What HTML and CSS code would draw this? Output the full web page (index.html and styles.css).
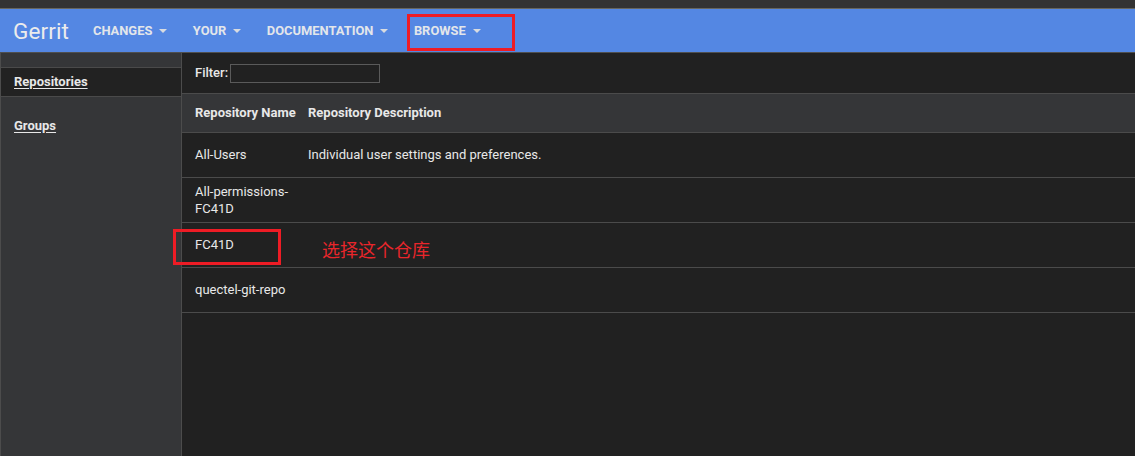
FILE: index.html
```html
<!DOCTYPE html>
<html lang="en">
<head>
<meta charset="utf-8">
<title>Gerrit - Repositories</title>
<link rel="stylesheet" href="styles.css">
</head>
<body>
<div class="topstrip"></div>
<header class="header">
  <div class="logo">Gerrit</div>
  <nav class="nav">
    <div class="nav-item">CHANGES<span class="caret"></span></div>
    <div class="nav-item">YOUR<span class="caret"></span></div>
    <div class="nav-item">DOCUMENTATION<span class="caret"></span></div>
    <div class="nav-item nav-marked">BROWSE<span class="caret"></span><span class="mark mark-nav"></span></div>
  </nav>
</header>
<div class="page">
  <aside class="sidebar">
    <a class="side-item selected" href="#">Repositories</a>
    <a class="side-item groups" href="#">Groups</a>
  </aside>
  <main class="main">
    <div class="filter">
      <label class="filter-label">Filter:</label>
      <input class="filter-input" type="text">
    </div>
    <div class="row head">
      <div class="c1">Repository Name</div>
      <div class="c2">Repository Description</div>
    </div>
    <div class="row">
      <div class="c1">All-Users</div>
      <div class="c2">Individual user settings and preferences.</div>
    </div>
    <div class="row">
      <div class="c1">All-permissions-FC41D</div>
      <div class="c2"></div>
    </div>
    <div class="row marked">
      <div class="c1">FC41D</div>
      <div class="c2"><span class="note">选择这个仓库</span></div>
      <span class="mark mark-row"></span>
    </div>
    <div class="row">
      <div class="c1">quectel-git-repo</div>
      <div class="c2"></div>
    </div>
  </main>
</div>
</body>
</html>
```

FILE: styles.css
```css
* { box-sizing: border-box; }
html, body { margin: 0; padding: 0; }
body {
  background: #212121;
  color: #e8e8e8;
  font-family: Roboto, "Noto Sans", "Liberation Sans", sans-serif;
  font-size: 13px;
  height: 456px;
  overflow: hidden;
}
.topstrip {
  height: 8px;
  background: #333333;
}
.header {
  height: 45px;
  background: #5487e3;
  border-top: 1px solid #66665f;
  border-bottom: 1px solid #4f4f4f;
  display: flex;
  align-items: center;
  padding-left: 13px;
}
.logo {
  font-size: 22.5px;
  color: #ececec;
  margin-right: 24px;
  letter-spacing: 0.1px;
}
.nav { display: flex; align-items: center; gap: 25.5px; }
.nav-item {
  position: relative;
  font-size: 12.9px;
  font-weight: 700;
  color: #e3e6ea;
  display: flex;
  align-items: center;
}
.caret {
  width: 0; height: 0;
  margin-left: 7px;
  border-left: 4.5px solid transparent;
  border-right: 4.5px solid transparent;
  border-top: 4.5px solid #d8dbe0;
}
.mark {
  position: absolute;
  border: 3px solid #ee1c25;
  pointer-events: none;
}
.mark-nav {
  left: -7px;
  top: calc(50% - 16.5px);
  width: 108px;
  height: 37px;
}
.page {
  display: flex;
  height: 403px;
}
.sidebar {
  width: 182px;
  flex: none;
  background: #353638;
  border-left: 1px solid #4c4c4c;
  border-right: 1px solid #4c4c4c;
  padding-top: 14px;
  display: flex;
  flex-direction: column;
}
.side-item {
  display: flex;
  align-items: center;
  height: 30px;
  padding-left: 13px;
  padding-bottom: 1px;
  color: #e8e8e8;
  font-weight: 700;
  text-decoration: underline;
  text-underline-offset: 2px;
}
.side-item.selected {
  background: #222222;
  border-top: 1px solid #4a4a4a;
  border-bottom: 1px solid #4a4a4a;
}
.side-item.groups { margin-top: 15px; height: 28px; }
.main { flex: 1; min-width: 0; }
.filter {
  height: 40px;
  display: flex;
  align-items: center;
  padding-left: 13px;
}
.filter-label { font-weight: 500; margin-right: 2px; margin-top: -1px; }
.filter-input {
  width: 150px;
  height: 19px;
  background: #212121;
  border: 1px solid #5a5a5a;
  border-radius: 0;
  padding: 0 3px;
  color: #e8e8e8;
  outline: none;
}
.row {
  position: relative;
  display: grid;
  grid-template-columns: 126px 1fr;
  align-items: center;
  min-height: 45px;
  border-bottom: 1px solid #4b4b4b;
  line-height: 17px;
  padding-bottom: 1px;
}
.row.head {
  min-height: 40px;
  border-top: 1px solid #4b4b4b;
  background: #353638;
  font-weight: 700;
}
.row.head .c1 { white-space: nowrap; }
.c1 { padding: 0 13px; }
.c2 { padding: 0; }
.note {
  display: inline-block;
  margin-left: 14px;
  margin-top: 10px;
  color: #e8262b;
  font-family: "Noto Sans CJK SC", sans-serif;
  font-size: 18px;
  line-height: 20px;
}
.mark-row {
  left: -9px;
  top: 6px;
  width: 108px;
  height: 36px;
}
```
